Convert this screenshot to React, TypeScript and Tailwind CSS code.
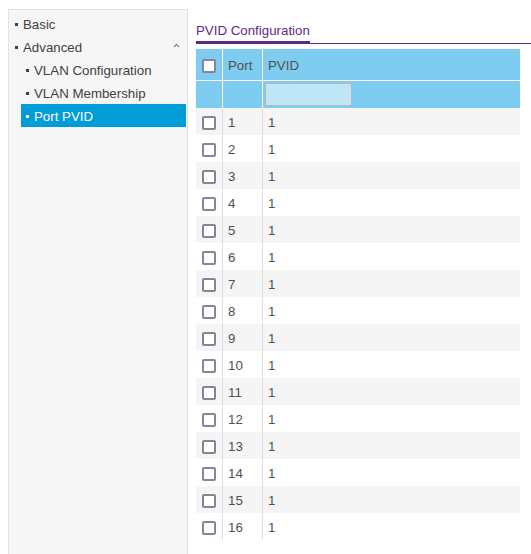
import React from "react";

const ports = Array.from({ length: 16 }, (_, i) => ({ port: i + 1, pvid: 1 }));

function Bullet() {
  return <span className="mr-[5px] inline-block h-[3px] w-[3px] shrink-0 bg-current" />;
}

function Checkbox() {
  return <span className="block h-[14px] w-[14px] rounded-[2px] border-2 border-[#87839a] bg-white" />;
}

function Sidebar() {
  return (
    <aside className="h-[560px] w-[180px] shrink-0 border border-b-0 border-[#e2e2e2] bg-[#f6f6f6] pt-[2px] text-[13.3px] text-[#3f3f3f]">
      <div className="flex h-[23px] items-center pl-[6px] pt-[2px]">
        <Bullet />
        Basic
      </div>
      <div className="flex h-[23px] items-center pl-[6px] pr-[6px] pt-[2px]">
        <Bullet />
        <span className="flex-1">Advanced</span>
        <svg width="7" height="5" viewBox="0 0 7 5" className="mb-[4px] mr-[1px]">
          <path d="M1 4 L3.5 1.5 L6 4" fill="none" stroke="#8a8a8a" strokeWidth="1.3" />
        </svg>
      </div>
      <div className="ml-[12px] mr-[1px]">
        <div className="flex h-[23px] items-center pl-[5px] pt-[2px]">
          <Bullet />
          VLAN Configuration
        </div>
        <div className="flex h-[23px] items-center pl-[5px] pt-[2px]">
          <Bullet />
          VLAN Membership
        </div>
        <div className="flex h-[23px] items-center bg-[#009dd8] pl-[5px] pt-[2px] text-white">
          <Bullet />
          Port PVID
        </div>
      </div>
    </aside>
  );
}

function PvidTable() {
  return (
    <div className="mt-[5px] w-[324px] text-[13.3px] text-[#505050]">
      <div className="flex h-[32px] border-b border-white bg-[#7ecdf0]">
        <div className="flex w-[27px] items-center justify-center border-r border-white pt-[2px]">
          <Checkbox />
        </div>
        <div className="flex w-[40px] items-center border-r border-white pl-[5px] pt-[2px]">Port</div>
        <div className="flex flex-1 items-center pl-[5px] pt-[2px]">PVID</div>
      </div>
      <div className="flex h-[27px] bg-[#7ecdf0]">
        <div className="w-[27px] border-r border-white" />
        <div className="w-[40px] border-r border-white" />
        <div className="flex flex-1 items-center pl-[2px]">
          <div className="h-[23px] w-[87px] border border-[#b8b8b8] bg-[#bee6f7]" />
        </div>
      </div>
      {ports.map((p, i) => (
        <div key={p.port} className={`flex h-[27px] ${i % 2 === 0 ? "bg-[#f5f5f5]" : "bg-white"}`}>
          <div className="flex w-[27px] items-center justify-center border-r border-[#dddddd] pt-[2px]">
            <Checkbox />
          </div>
          <div className="flex w-[40px] items-center border-r border-[#dddddd] pl-[5px] pt-[2px]">{p.port}</div>
          <div className="flex flex-1 items-center pl-[5px] pt-[2px]">{p.pvid}</div>
        </div>
      ))}
    </div>
  );
}

export default function App() {
  return (
    <div
      className="flex h-[554px] w-[531px] overflow-hidden bg-white pl-[8px] pt-[9px]"
      style={{ fontFamily: '"Liberation Sans", Arial, sans-serif' }}
    >
      <Sidebar />
      <main className="-mt-[9px] ml-[8px] flex-1">
        <div className="flex h-[44px] items-end border-b border-[#5b2a86]">
          <div className="-mb-px border-b-[3px] border-[#5b2a86] pb-[2px] text-[13.3px] leading-[16px] text-[#5b2a86]">
            PVID Configuration
          </div>
        </div>
        <PvidTable />
      </main>
    </div>
  );
}
